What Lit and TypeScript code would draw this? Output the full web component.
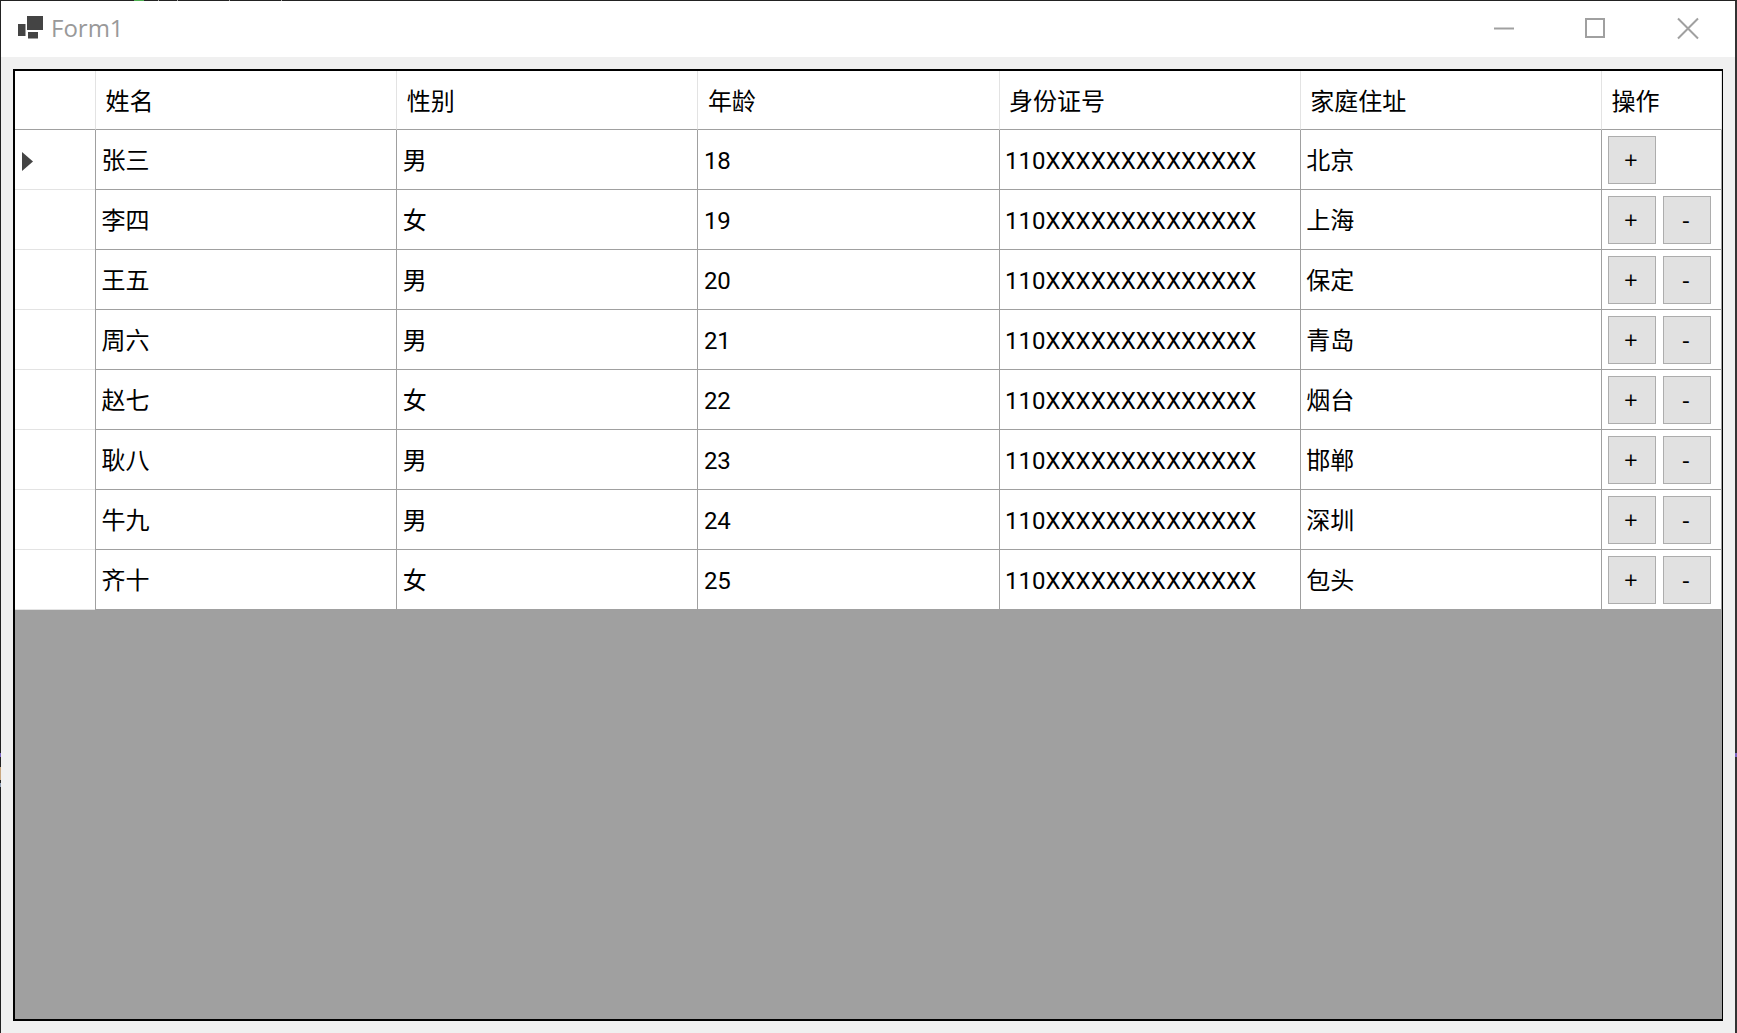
import { LitElement, html, css } from "lit";
import { customElement } from "lit/decorators.js";

const COLS = ["姓名", "性别", "年龄", "身份证号", "家庭住址", "操作"];
const ROWS: [string, string, string, string][] = [
  ["张三", "男", "18", "北京"],
  ["李四", "女", "19", "上海"],
  ["王五", "男", "20", "保定"],
  ["周六", "男", "21", "青岛"],
  ["赵七", "女", "22", "烟台"],
  ["耿八", "男", "23", "邯郸"],
  ["牛九", "男", "24", "深圳"],
  ["齐十", "女", "25", "包头"],
];
const ID = "110XXXXXXXXXXXXXX";
// Stray slivers of the desktop behind the window, visible along its edges.
const SLIVERS: [number, number, number, number, string][] = [
  [134, 0, 10, 1, "#4caf50"],
  [158, 0, 1, 1, "#aaa"],
  [177, 0, 1, 1, "#aaa"],
  [229, 0, 1, 1, "#aaa"],
  [281, 0, 1, 1, "#aaa"],
  [0, 753, 1, 4, "#7a63c0"],
  [0, 767, 1, 13, "#c9a77f"],
  [0, 783, 1, 4, "#8d9bb0"],
  [1735, 753, 2, 4, "#7a63c0"],
];

@customElement("app-root")
export class AppRoot extends LitElement {
  static styles = css`
    :host {
      display: block;
      position: relative;
      width: 1737px;
      height: 1033px;
      overflow: hidden;
      font-family: Roboto, "Noto Sans CJK SC", sans-serif;
      color: #000;
    }
    .window {
      box-sizing: border-box;
      width: 100%;
      height: 100%;
      display: flex;
      flex-direction: column;
      background: #f0f0f0;
      border-top: 1px solid #222;
      border-left: 1px solid #222;
      border-right: 2px solid #333;
    }
    .sliver { position: absolute; }
    .titlebar {
      height: 56px;
      flex: none;
      box-sizing: border-box;
      background: #fff;
      display: flex;
      align-items: center;
      padding: 0 0 2px 16px;
    }
    .logo { width: 26px; height: 26px; flex: none; }
    .title {
      margin-left: 8px;
      font-size: 24px;
      color: #999;
      font-family: "Open Sans", sans-serif;
      line-height: 1;
    }
    .controls { margin-left: auto; display: flex; margin-right: 27px; gap: 51px; align-items: center; }
    .controls svg { display: block; width: 40px; height: 26px; }
    .controls svg:last-child { margin-left: 2px; }
    .client { flex: 1; padding: 12px; display: flex; min-height: 0; }
    .grid {
      flex: 1;
      box-sizing: border-box;
      background: #a0a0a0;
      border: solid #000;
      border-width: 2px 1px 2px 2px;
      display: grid;
      grid-template-columns: 80px repeat(5, 301.2px) 1fr;
      grid-template-rows: 59px repeat(8, 60px);
      align-content: start;
    }
    .cell {
      box-sizing: border-box;
      background: #fff;
      display: flex;
      align-items: center;
      font-size: 24px;
      line-height: 1;
      white-space: nowrap;
      padding: 3px 0 0 5.5px;
      border-left: 1px solid #a0a0a0;
      border-bottom: 1px solid #a0a0a0;
    }
    .head { padding-left: 9.5px; border-left-color: #e3e3e3; }
    .rowhead { border-left: none; padding: 1px 0 0 7px; border-bottom-color: #e3e3e3; }
    .corner { border-left: none; }
    .last { border-right: 1px solid #a0a0a0; }
    .head.last { border-right-color: #e3e3e3; }
    .actions { padding: 1px 0 0 6px; gap: 7px; }
    .btn {
      box-sizing: border-box;
      width: 48px;
      height: 48px;
      flex: none;
      background: #e1e1e1;
      border: 1px solid #adadad;
      display: flex;
      align-items: center;
      justify-content: center;
      font-size: 24px;
      font-family: "Open Sans", sans-serif;
      color: #000;
      padding: 0 2px 0 0;
    }
    .arrow { width: 11px; height: 19px; display: block; margin-top: 3px; }
  `;

  render() {
    return html`
      <div class="window">
        <div class="titlebar">
          <svg class="logo" viewBox="0 0 26 26">
            <rect x="10" y="1" width="16" height="14" fill="#444"/>
            <rect x="1" y="9" width="7.5" height="12" fill="#444"/>
            <rect x="11" y="17" width="10" height="6.5" fill="#444"/>
          </svg>
          <span class="title">Form1</span>
          <div class="controls">
            <svg viewBox="0 0 40 26"><path d="M10 13.5h20" stroke="#a0a0a0" stroke-width="2" fill="none"/></svg>
            <svg viewBox="0 0 40 26"><rect x="11" y="4" width="18" height="18" stroke="#a0a0a0" stroke-width="2" fill="none"/></svg>
            <svg viewBox="0 0 40 26"><path d="M10 3.5l20 20M30 3.5l-20 20" stroke="#a0a0a0" stroke-width="2" fill="none"/></svg>
          </div>
        </div>
        <div class="client">
          <div class="grid">
            <div class="cell corner"></div>
            ${COLS.map((c, i) => html`<div class="cell head ${i === 5 ? "last" : ""}">${c}</div>`)}
            ${ROWS.map((r, i) => html`
              <div class="cell rowhead">
                ${i === 0 ? html`<svg class="arrow" viewBox="0 0 11 19"><path d="M0 0l11 9.5L0 19z" fill="#444"/></svg>` : ""}
              </div>
              <div class="cell">${r[0]}</div>
              <div class="cell">${r[1]}</div>
              <div class="cell">${r[2]}</div>
              <div class="cell">${ID}</div>
              <div class="cell">${r[3]}</div>
              <div class="cell actions last">
                <div class="btn">+</div>
                ${i > 0 ? html`<div class="btn">-</div>` : ""}
              </div>
            `)}
          </div>
        </div>
      </div>
      ${SLIVERS.map(
        ([x, y, w, h, c]) => html`<div class="sliver" style="left:${x}px;top:${y}px;width:${w}px;height:${h}px;background:${c}"></div>`
      )}
    `;
  }
}
